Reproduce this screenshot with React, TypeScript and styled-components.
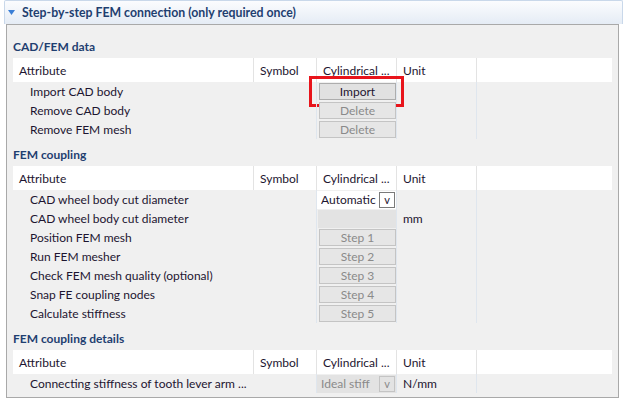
import React from 'react';
import styled, { createGlobalStyle } from 'styled-components';

const GlobalStyle = createGlobalStyle`
  html, body {
    margin: 0;
    padding: 0;
    background: #ffffff;
    font-family: Lato, "Liberation Sans", sans-serif;
    font-size: 12px;
  }
`;

type Cell =
  | { kind: 'button'; label: string; disabled?: boolean; marked?: boolean }
  | { kind: 'select'; label: string; disabled?: boolean }
  | { kind: 'blank' }
  | { kind: 'none' };

type Row = { attribute: string; value: Cell; unit?: string };

type Section = { title: string; rows: Row[] };

const sections: Section[] = [
  {
    title: 'CAD/FEM data',
    rows: [
      { attribute: 'Import CAD body', value: { kind: 'button', label: 'Import', marked: true } },
      { attribute: 'Remove CAD body', value: { kind: 'button', label: 'Delete', disabled: true } },
      { attribute: 'Remove FEM mesh', value: { kind: 'button', label: 'Delete', disabled: true } },
    ],
  },
  {
    title: 'FEM coupling',
    rows: [
      { attribute: 'CAD wheel body cut diameter', value: { kind: 'select', label: 'Automatic' } },
      { attribute: 'CAD wheel body cut diameter', value: { kind: 'blank' }, unit: 'mm' },
      { attribute: 'Position FEM mesh', value: { kind: 'button', label: 'Step 1', disabled: true } },
      { attribute: 'Run FEM mesher', value: { kind: 'button', label: 'Step 2', disabled: true } },
      { attribute: 'Check FEM mesh quality (optional)', value: { kind: 'button', label: 'Step 3', disabled: true } },
      { attribute: 'Snap FE coupling nodes', value: { kind: 'button', label: 'Step 4', disabled: true } },
      { attribute: 'Calculate stiffness', value: { kind: 'button', label: 'Step 5', disabled: true } },
    ],
  },
  {
    title: 'FEM coupling details',
    rows: [
      {
        attribute: 'Connecting stiffness of tooth lever arm ...',
        value: { kind: 'select', label: 'Ideal stiff', disabled: true },
        unit: 'N/mm',
      },
    ],
  },
];

const COLUMNS = '240px 63px 80px 80px 1fr';

export default function App() {
  return (
    <>
      <GlobalStyle />
      <Header>
        <svg width="8" height="6" viewBox="0 0 8 6">
          <path d="M0 0 H7 L3.5 5 Z" fill="#3b7fd6" />
        </svg>
        <HeaderTitle>Step-by-step FEM connection (only required once)</HeaderTitle>
      </Header>
      <Panel>
        {sections.map((section) => (
          <div key={section.title}>
            <SectionTitle>{section.title}</SectionTitle>
            <HeadRow>
              <HeadCell>Attribute</HeadCell>
              <HeadCell>Symbol</HeadCell>
              <HeadCell>Cylindrical ...</HeadCell>
              <HeadCell>Unit</HeadCell>
              <HeadCell />
            </HeadRow>
            {section.rows.map((row, i) => (
              <BodyRow key={i}>
                <AttrCell>{row.attribute}</AttrCell>
                <BodyCell />
                <ValueCell>{renderValue(row.value)}</ValueCell>
                <UnitCell>{row.unit}</UnitCell>
                <BodyCell />
              </BodyRow>
            ))}
          </div>
        ))}
      </Panel>
    </>
  );
}

function renderValue(value: Cell) {
  switch (value.kind) {
    case 'button':
      return (
        <>
          <Button $disabled={value.disabled}>{value.label}</Button>
          {value.marked && <Marker />}
        </>
      );
    case 'select':
      return (
        <Select $disabled={value.disabled}>
          <SelectText>{value.label}</SelectText>
          <SelectArrow $disabled={value.disabled}>v</SelectArrow>
        </Select>
      );
    case 'blank':
      return <Blank />;
    default:
      return null;
  }
}

const Header = styled.div`
  display: flex;
  align-items: center;
  gap: 6px;
  height: 23px;
  margin: 0 2px 0 4px;
  padding-left: 3px;
  border: 1px solid #c9d8ea;
  border-bottom: none;
  border-radius: 2px 2px 0 0;
  background: linear-gradient(#fbfcfe, #e5ecf5);
`;

const HeaderTitle = styled.span`
  font-weight: 700;
  font-size: 12.3px;
  color: #1f3f70;
`;

const Panel = styled.div`
  margin: 0 6px 0 6px;
  padding: 6px 6px 4px;
  border: 1px solid #a9a9a9;
  background: #f0f0f0;
  color: #1d1530;
`;

const SectionTitle = styled.div`
  padding: 8px 0 3px;
  line-height: 16px;
  font-weight: 700;
  color: #1f3f70;
`;

const HeadRow = styled.div`
  display: grid;
  grid-template-columns: ${COLUMNS};
  height: 24px;
  background: #ffffff;
`;

const HeadCell = styled.div`
  display: flex;
  align-items: center;
  padding-left: 6px;
  & + & {
    border-left: 1px solid #e3e3e3;
  }
`;

const BodyRow = styled.div`
  display: grid;
  grid-template-columns: ${COLUMNS};
  height: 19px;
`;

const BodyCell = styled.div`
  & + & {
    border-left: 1px solid #dfe6ee;
  }
  &:last-child {
    border-left: 1px solid #dfe6ee;
  }
`;

const AttrCell = styled.div`
  display: flex;
  align-items: center;
  padding-left: 17px;
  white-space: nowrap;
  overflow: hidden;
`;

const ValueCell = styled.div`
  position: relative;
  display: flex;
  align-items: center;
  border-left: 1px solid #dfe6ee;
`;

const UnitCell = styled.div`
  display: flex;
  align-items: center;
  padding-left: 6px;
  border-left: 1px solid #dfe6ee;
`;

const Button = styled.div<{ $disabled?: boolean }>`
  box-sizing: border-box;
  width: 77px;
  height: 17px;
  margin-left: 2px;
  display: flex;
  align-items: center;
  justify-content: center;
  background: ${(p) => (p.$disabled ? '#e6e6e6' : '#e1e1e1')};
  border: 1px solid ${(p) => (p.$disabled ? '#c4c4c4' : '#adadad')};
  color: ${(p) => (p.$disabled ? '#8a8a8a' : '#1d1530')};
`;

const Marker = styled.span`
  position: absolute;
  left: -8px;
  right: -8px;
  top: -6px;
  bottom: -6px;
  border: 3px solid #e8141b;
  pointer-events: none;
`;

const Select = styled.div<{ $disabled?: boolean }>`
  box-sizing: border-box;
  display: flex;
  align-items: center;
  width: 100%;
  height: 18px;
  padding: 0 1px 0 4px;
  background: ${(p) => (p.$disabled ? '#e3e3e3' : '#ffffff')};
  color: ${(p) => (p.$disabled ? '#8a8a8a' : '#1d1530')};
`;

const SelectText = styled.span`
  flex: 1;
  overflow: hidden;
  white-space: nowrap;
`;

const SelectArrow = styled.span<{ $disabled?: boolean }>`
  box-sizing: border-box;
  width: 16px;
  height: 16px;
  display: flex;
  align-items: center;
  justify-content: center;
  font-size: 11px;
  border: 1px solid ${(p) => (p.$disabled ? '#c4c4c4' : '#7a7a7a')};
  background: ${(p) => (p.$disabled ? '#e3e3e3' : '#ffffff')};
`;

const Blank = styled.div`
  width: 78px;
  height: 18px;
  margin-left: 1px;
  background: #e3e3e3;
`;
